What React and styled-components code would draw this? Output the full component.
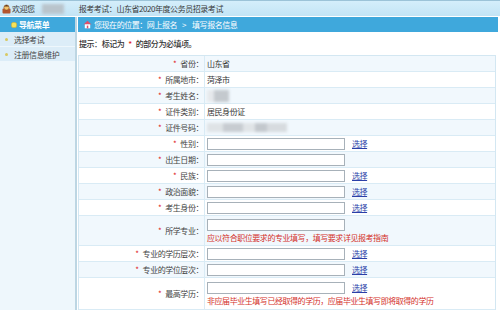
import styled, { createGlobalStyle } from "styled-components";

const GlobalStyle = createGlobalStyle`
  html, body {
    margin: 0;
    padding: 0;
  }
  body {
    font-family: "Noto Sans CJK SC", "Noto Sans", sans-serif;
    font-size: 8px;
    letter-spacing: -0.45px;
    color: #333;
    background: #fff;
  }
`

const Page = styled.div`
  width: 500px;
  height: 310px;
  overflow: hidden;
`

const TopBar = styled.header`
  height: 15px;
  border-top: 1px solid #9cc3d8;
  border-bottom: 1px solid #fff;
  background: linear-gradient(#d4eefb, #c3e4f5);
  display: flex;
  align-items: center;
  padding-left: 2px;
  color: #3a3a3a;
`

const Welcome = styled.span`
  display: flex;
  align-items: center;
  gap: 1px;
`

const BlurName = styled.span`
  width: 22px;
  height: 10px;
  margin: 0 15px 0 7px;
  background: #b9c4cc;
  filter: blur(1.5px);
`

const Body = styled.div`
  display: flex;
  height: 293px;
`

const Sidebar = styled.aside`
  width: 75px;
  flex-shrink: 0;
  background: #eef7fc;
  border-right: 2px solid #bdd6e3;
`

const BlueBar = styled.div`
  height: 15px;
  background: #3fa8dc;
  color: #fff;
  display: flex;
  align-items: center;
`

const SideHeader = styled(BlueBar)`
  padding-left: 11px;
  gap: 2px;
  font-weight: bold;
`

const MenuItem = styled.div`
  height: 14px;
  display: flex;
  align-items: center;
  padding-left: 5px;
  gap: 6px;
  background: #dcedf8;
  border-bottom: 1px solid #eef7fc;
  color: #444;
`

const Dot = styled.span`
  width: 3px;
  height: 3px;
  border-radius: 50%;
  background: #d8c862;
`

const Main = styled.main`
  flex: 1;
  padding-left: 1px;
  min-width: 0;
`

const Crumb = styled(BlueBar)`
  margin-right: 2px;
  padding-left: 5px;
  gap: 2px;
`

const Sep = styled.span`
  margin: 0 6px 0 5px;
`

const Hint = styled.p`
  margin: 0;
  height: 23px;
  display: flex;
  align-items: center;
  padding-left: 1px;
  color: #333;
  font-weight: 500;
`

const Star = styled.span`
  color: #e02020;
  margin: 0 4px;
`

const Table = styled.div`
  width: 416px;
  border: 1px solid #d3e7f2;
  border-bottom: none;
`

const Row = styled.div`
  display: flex;
  height: ${(p) => p.$h}px;
  background: ${(p) => (p.$light ? "#f1f8fd" : "#fff")};
  border-bottom: 1px solid #d9ebf5;
  box-sizing: border-box;
`

const Label = styled.div`
  width: 126px;
  flex-shrink: 0;
  border-right: 1px solid #d9ebf5;
  display: flex;
  align-items: center;
  justify-content: flex-end;
  padding-right: 1px;
  box-sizing: border-box;
  color: #444;
`

const LabelStar = styled.span`
  color: #e02020;
  margin-right: 4px;
`

const Value = styled.div`
  flex: 1;
  padding-left: 2px;
  display: flex;
  flex-direction: column;
  justify-content: center;
  color: #333;
`

const Line = styled.div`
  display: flex;
  align-items: center;
  height: 15px;
`

const Field = styled.input`
  width: 138px;
  height: 12px;
  box-sizing: border-box;
  border: 1px solid #a7b1b9;
  background: #fff;
  margin: 0;
  padding: 0;
`

const Pick = styled.a`
  margin-left: 7px;
  color: #2b3fa8;
  text-decoration: underline;
  cursor: pointer;
`

const Note = styled.div`
  color: #d4302a;
  height: 12px;
  line-height: 12px;
`

const Blur = styled.span`
  display: block;
  width: ${(p) => p.$w}px;
  height: ${(p) => p.$h}px;
  background: ${(p) => p.$bg};
  filter: blur(1.5px);
`

const rows = [
  { label: "省份", value: "山东省" },
  { label: "所属地市", value: "菏泽市" },
  { label: "考生姓名", blur: "name" },
  { label: "证件类别", value: "居民身份证" },
  { label: "证件号码", blur: "id" },
  { label: "性别", input: true, pick: true },
  { label: "出生日期", input: true },
  { label: "民族", input: true, pick: true },
  { label: "政治面貌", input: true, pick: true },
  { label: "考生身份", input: true, pick: true },
  { label: "所学专业", input: true, note: "应以符合职位要求的专业填写，填写要求详见报考指南" },
  { label: "专业的学历层次", input: true, pick: true },
  { label: "专业的学位层次", input: true, pick: true },
  { label: "最高学历", input: true, pick: true, note: "非应届毕业生填写已经取得的学历，应届毕业生填写即将取得的学历" },
]

const UserIcon = () => (
  <svg width="9" height="10" viewBox="0 0 9 10">
    <rect x="0.5" y="4.5" width="8" height="5" rx="1" fill="#b5552e" />
    <circle cx="4.5" cy="3.5" r="2.6" fill="#f3c56b" stroke="#8a4a20" strokeWidth="0.6" />
    <path d="M2 2.5 Q4.5 -0.5 7 2.5 Z" fill="#5a3218" />
  </svg>
)

const MenuIcon = () => (
  <svg width="6" height="6" viewBox="0 0 6 6">
    <rect x="0.5" y="0.5" width="5" height="5" rx="1.5" fill="#f7e35a" stroke="#d9b52e" strokeWidth="0.6" />
  </svg>
)

const HomeIcon = () => (
  <svg width="9" height="9" viewBox="0 0 9 9">
    <path d="M4.5 0.8 L8.5 4.5 L0.5 4.5 Z" fill="#e0506a" />
    <rect x="1.8" y="4.3" width="5.4" height="4" fill="#fff" />
    <rect x="3.8" y="5.6" width="1.5" height="2.7" fill="#e0506a" />
  </svg>
)

const renderValue = (row) => {
  if (row.value) return row.value
  if (row.blur === "name") return <Blur $w={22} $h={12} $bg="linear-gradient(90deg, #e6e9ec 0 30%, #c4c9ce 30% 100%)" />
  if (row.blur === "id") {
    return (
      <Blur
        $w={80}
        $h={9}
        $bg="linear-gradient(90deg, #dfe3e6 0 20%, #c7ccd1 20% 45%, #e0e4e7 45% 60%, #c3c8cd 60% 75%, #d7dbdf 75% 100%)"
      />
    )
  }
  return (
    <>
      <Line>
        <Field type="text" />
        {row.pick && <Pick>选择</Pick>}
      </Line>
      {row.note && <Note>{row.note}</Note>}
    </>
  )
}

export default function App() {
  return (
    <>
      <GlobalStyle />
      <Page>
        <TopBar>
          <Welcome>
            <UserIcon />
            欢迎您
          </Welcome>
          <BlurName />
          报考考试：山东省2020年度公务员招录考试
        </TopBar>
        <Body>
          <Sidebar>
            <SideHeader>
              <MenuIcon />
              导航菜单
            </SideHeader>
            <MenuItem>
              <Dot />
              选择考试
            </MenuItem>
            <MenuItem>
              <Dot />
              注册信息维护
            </MenuItem>
          </Sidebar>
          <Main>
            <Crumb>
              <HomeIcon />
              <span>
                您现在的位置：网上报名<Sep>&gt;</Sep>填写报名信息
              </span>
            </Crumb>
            <Hint>
              提示：标记为<Star>*</Star>的部分为必填项。
            </Hint>
            <Table>
              {rows.map((row, i) => (
                <Row key={row.label} $light={i % 2 === 0} $h={row.note ? (i === 10 ? 30 : 32) : 16}>
                  <Label>
                    <LabelStar>*</LabelStar>
                    {row.label}：
                  </Label>
                  <Value>{renderValue(row)}</Value>
                </Row>
              ))}
            </Table>
          </Main>
        </Body>
      </Page>
    </>
  )
}
